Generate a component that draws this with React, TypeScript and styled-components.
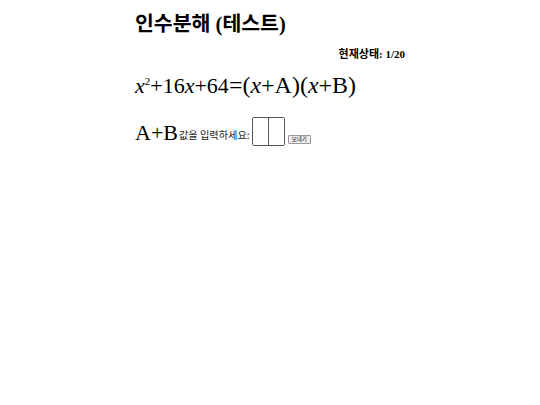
import React from "react";
import styled, { createGlobalStyle } from "styled-components";

const Global = createGlobalStyle`
  html, body { margin: 0; padding: 0; background: #fff; }
  body { font-family: "Liberation Serif", "Noto Sans CJK KR", serif; color: #000; }
`;

const Page = styled.div`
  width: 270px;
  margin: 0 auto;
  padding-top: 11px;
  display: flex;
  flex-direction: column;
`;

const Title = styled.h1`
  margin: 0;
  font-size: 20.5px;
  font-weight: bold;
  line-height: 26px;
`;

const Status = styled.div`
  margin-top: 10px;
  align-self: flex-end;
  font-size: 11px;
  font-weight: bold;
  line-height: 14px;
`;

const Equation = styled.div`
  margin-top: 9px;
  display: flex;
  align-items: baseline;
  line-height: 30px;
`;

const Part = styled.span<{ $size: number }>`
  font-size: ${(p) => p.$size}px;
  font-family: "Liberation Serif", serif;
`;

const Var = styled.i`
  font-style: italic;
`;

const Sup = styled.sup`
  font-size: 0.5em;
  vertical-align: 0.7em;
  line-height: 0;
`;

const AnswerRow = styled.div`
  margin-top: 16px;
  display: flex;
  align-items: flex-end;
`;

const Label = styled.span`
  font-size: 22px;
  font-family: "Liberation Serif", serif;
  line-height: 26px;
`;

const Prompt = styled.span`
  font-size: 10.2px;
  font-family: "Noto Sans CJK KR", sans-serif;
  color: #222;
  line-height: 14px;
  margin-bottom: 4px;
  margin-left: 1px;
`;

const Boxes = styled.div`
  display: flex;
  margin-left: 2px;
  border: 1.5px solid #555;
  border-radius: 2px;
  height: 27px;
`;

const Digit = styled.input<{ $last?: boolean }>`
  width: 15px;
  height: 27px;
  padding: 0;
  margin: 0;
  border: none;
  border-left: ${(p) => (p.$last ? "1px solid #555" : "none")};
  outline: none;
  background: #fff;
  font-size: 16px;
  text-align: center;
`;

const Send = styled.button`
  margin-left: 3px;
  margin-bottom: 2px;
  height: 9px;
  padding: 0 3px;
  font-size: 5.5px;
  line-height: 7px;
  font-family: "Noto Sans CJK KR", sans-serif;
  background: #efefef;
  border: 1px solid #999;
  border-radius: 1px;
  color: #111;
`;

export default function App() {
  return (
    <>
      <Global />
      <Page>
        <Title>인수분해 (테스트)</Title>
        <Status>현재상태: 1/20</Status>
        <Equation>
          <Part $size={22}>
            <Var>x</Var>
            <Sup>2</Sup>+16<Var>x</Var>+64
          </Part>
          <Part $size={24}>
            =(<Var>x</Var>+A)(<Var>x</Var>+B)
          </Part>
        </Equation>
        <AnswerRow>
          <Label>A+B</Label>
          <Prompt>값을 입력하세요:</Prompt>
          <Boxes>
            <Digit />
            <Digit $last />
          </Boxes>
          <Send>보내기</Send>
        </AnswerRow>
      </Page>
    </>
  );
}
